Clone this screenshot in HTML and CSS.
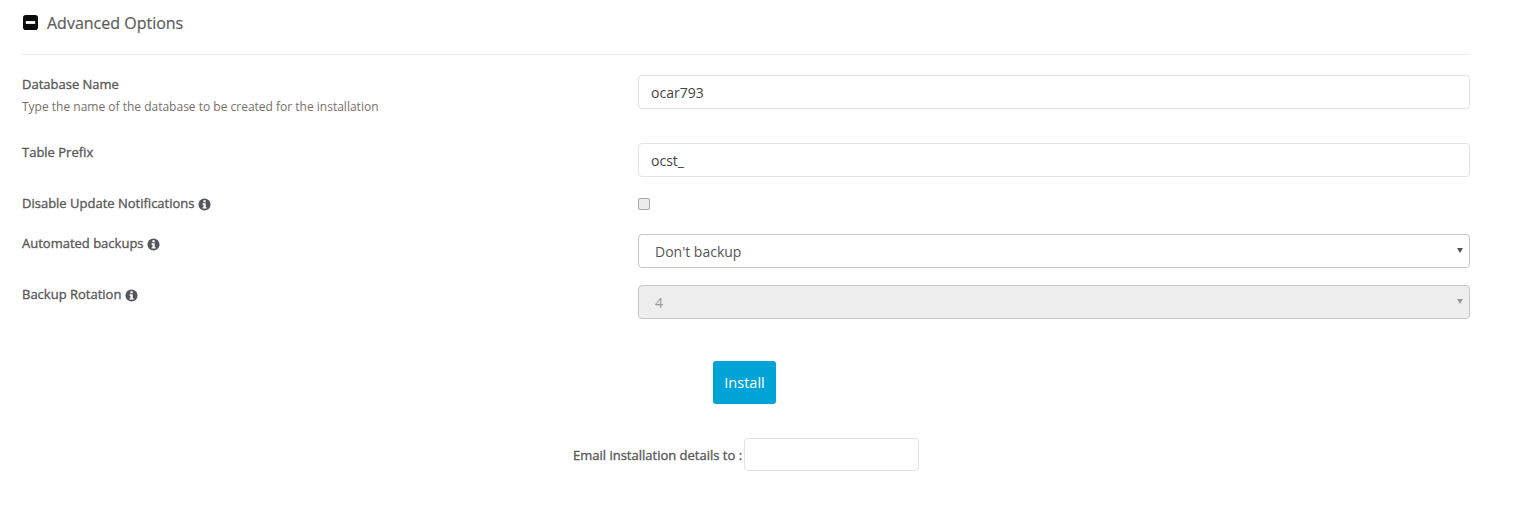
FILE: index.html
```html
<!DOCTYPE html>
<html lang="en">
<head>
<meta charset="utf-8">
<title>Advanced Options</title>
<link rel="stylesheet" href="styles.css">
</head>
<body>
<main class="page">
  <h2 class="section-title">
    <svg class="toggle" viewBox="0 0 16 16" aria-hidden="true"><rect width="16" height="16" rx="3" fill="#0b0b0b"/><rect x="3" y="6.5" width="10" height="3" fill="#fff"/></svg>
    <span>Advanced Options</span>
  </h2>
  <form class="form">
    <div class="row row-db">
      <div class="label-col">
        <label class="label">Database Name</label>
        <p class="hint">Type the name of the database to be created for the installation</p>
      </div>
      <input class="input" type="text" value="ocar793">
    </div>
    <div class="row row-prefix">
      <div class="label-col"><label class="label">Table Prefix</label></div>
      <input class="input" type="text" value="ocst_">
    </div>
    <div class="row row-check">
      <div class="label-col">
        <label class="label">Disable Update Notifications</label>
        <svg class="info" viewBox="0 0 14 14" aria-hidden="true"><circle cx="7" cy="7" r="6.5" fill="#54565f"/><rect x="5.8" y="2.4" width="2.5" height="2.2" fill="#fff"/><path d="M4.9 5.7h3.4v4.2h1v1.5H4.9V9.900h1V7.200h-1z" fill="#fff"/></svg>
      </div>
      <input class="check" type="checkbox">
    </div>
    <div class="row row-backup">
      <div class="label-col">
        <label class="label">Automated backups</label>
        <svg class="info" viewBox="0 0 14 14" aria-hidden="true"><circle cx="7" cy="7" r="6.5" fill="#54565f"/><rect x="5.8" y="2.4" width="2.5" height="2.2" fill="#fff"/><path d="M4.9 5.7h3.4v4.2h1v1.5H4.9V9.900h1V7.200h-1z" fill="#fff"/></svg>
      </div>
      <div class="select-wrap">
        <select class="select"><option>Don't backup</option></select>
      </div>
    </div>
    <div class="row row-rotation">
      <div class="label-col">
        <label class="label">Backup Rotation</label>
        <svg class="info info-rotation" viewBox="0 0 14 14" aria-hidden="true"><circle cx="7" cy="7" r="6.5" fill="#54565f"/><rect x="5.8" y="2.4" width="2.5" height="2.2" fill="#fff"/><path d="M4.9 5.7h3.4v4.2h1v1.5H4.9V9.900h1V7.200h-1z" fill="#fff"/></svg>
      </div>
      <div class="select-wrap is-disabled">
        <select class="select" disabled><option>4</option></select>
      </div>
    </div>
    <div class="actions">
      <button class="install" type="button">Install</button>
    </div>
    <div class="email">
      <label class="label">Email installation details to :</label>
      <input class="email-input" type="text">
    </div>
  </form>
</main>
</body>
</html>
```

FILE: styles.css
```css
* { box-sizing: border-box; }
html, body { margin: 0; padding: 0; background: #fff; }
body {
  font-family: "Open Sans", sans-serif;
  font-size: 13px;
  color: #555;
  height: 508px;
  overflow: hidden;
}
.page { width: 1448px; margin-left: 22px; }
.section-title {
  display: flex;
  align-items: center;
  gap: 9px;
  height: 55px;
  margin: 0;
  padding: 0 0 9px 1px;
  border-bottom: 1px solid #eaeaea;
  font-size: 16px;
  font-weight: 400;
  line-height: 46px;
  color: #5c5c5c;
  -webkit-text-stroke: 0.2px #5c5c5c;
}
.toggle { width: 15px; height: 15px; flex: none; }
.form { display: block; padding-top: 20px; }
.row {
  display: grid;
  grid-template-columns: 616px 832px;
  align-items: start;
}
.row-db { height: 68px; }
.row-prefix { height: 50px; }
.row-check { height: 41px; }
.row-backup { height: 51px; }
.row-rotation { height: 76px; }
.label-col { display: flex; flex-wrap: wrap; align-items: center; column-gap: 3px; }
.row-check .label-col { padding-top: 1px; }
.label {
  font-size: 13px;
  font-weight: 400;
  line-height: 18px;
  color: #5a5a5a;
  -webkit-text-stroke: 0.35px #5a5a5a;
}
.hint {
  width: 100%;
  margin: 5px 0 0;
  font-size: 12px;
  line-height: 18px;
  color: #77706a;
}
.info { width: 13px; height: 13px; flex: none; margin-top: 2px; }
.info-rotation { margin-left: 1px; }
.input {
  width: 832px;
  height: 34px;
  padding: 0 12px;
  border: 1px solid #e3e3e3;
  border-radius: 4px;
  background: #fff;
  font: 400 14px "Open Sans", sans-serif;
  color: #444;
  outline: none;
}
.check {
  width: 12px;
  height: 12px;
  margin: 5px 0 0 0;
  appearance: none;
  border: 1px solid #a5a5a5;
  border-radius: 2px;
  background: #ececec;
}
.select-wrap { position: relative; width: 832px; height: 34px; }
.select-wrap::after {
  content: "";
  position: absolute;
  right: 7px;
  top: 14px;
  border-left: 3px solid transparent;
  border-right: 3px solid transparent;
  border-top: 5px solid #555;
}
.select-wrap.is-disabled::after { border-top-color: #999; }
.select {
  appearance: none;
  width: 100%;
  height: 34px;
  padding: 0 16px;
  border: 1px solid #c6c6c6;
  border-radius: 4px;
  background: #fff;
  font: 400 14px "Open Sans", sans-serif;
  color: #555;
  outline: none;
}
.select:disabled { background: #eee; color: #999; opacity: 1; }
.actions { padding-left: 691px; height: 77px; }
.install {
  display: block;
  width: 63px;
  height: 43px;
  border: 0;
  border-radius: 3px;
  background: #00a3d6;
  color: #fff;
  font: 400 14.5px "Open Sans", sans-serif;
  padding: 0;
}
.email {
  display: flex;
  align-items: center;
  gap: 2px;
  padding-left: 551px;
  height: 33px;
}
.email-input {
  width: 175px;
  height: 33px;
  border: 1px solid #e3e3e3;
  border-radius: 4px;
  background: #fff;
  outline: none;
}
```
